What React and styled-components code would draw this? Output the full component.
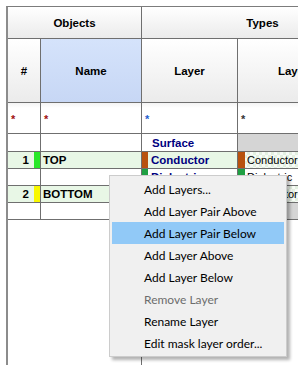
import styled, { createGlobalStyle } from 'styled-components';

const GlobalStyle = createGlobalStyle`
  html, body {
    margin: 0;
    padding: 0;
    background: #fff;
  }
  body {
    width: 298px;
    height: 365px;
    overflow: hidden;
    font-family: "Liberation Sans", Arial, sans-serif;
  }
`;

// widths include the 1px right grid line
const W = { num: 33, name: 101, layer: 96, type: 146 };

const Screen = styled.div`
  position: relative;
  width: 298px;
  height: 365px;
  overflow: hidden;
  box-sizing: border-box;
  padding: 6px 0 0 6px;
`;

const Sheet = styled.div`
  display: flex;
  flex-direction: column;
  width: max-content;
  height: 100%;
  border-left: 2px solid #8c8c8c;
  border-top: 1px solid #7c7c7c;
`;

const Row = styled.div`
  display: flex;
  flex-shrink: 0;
  height: ${(p) => p.$h}px;
`;

const Cell = styled.div`
  box-sizing: border-box;
  width: ${(p) => p.$w}px;
  display: flex;
  align-items: center;
  justify-content: ${(p) => p.$justify || 'flex-start'};
  padding-left: ${(p) => p.$pad || 0}px;
  border-right: 1px solid #6f6f6f;
  border-bottom: 1px solid #6f6f6f;
  background: ${(p) => p.$bg || '#fff'};
  font-size: 11.5px;
  font-weight: bold;
  color: #000;
  white-space: nowrap;
  overflow: hidden;
`;

const HeadCell = styled(Cell)`
  justify-content: center;
  background: ${(p) =>
    p.$selected
      ? 'linear-gradient(#d5e3fb, #c7d7f5)'
      : 'linear-gradient(#ffffff, #ebebeb)'};
`;

const FilterCell = styled(Cell)`
  align-items: flex-start;
  padding-top: 11px;
  padding-left: 3px;
  background: linear-gradient(#f4f4f4, #ffffff 5px);
`;

const Star = styled.span`
  color: ${(p) => p.$color};
  font-size: 11px;
  line-height: 11px;
`;

const Strip = styled.span`
  align-self: stretch;
  width: ${(p) => p.$w || 6}px;
  flex-shrink: 0;
  background: ${(p) => p.$color || 'transparent'};
`;

const Num = styled.span`
  margin-right: 5px;
`;

const LayerText = styled.span`
  margin-left: ${(p) => p.$gap || 3}px;
  color: ${(p) => (p.$plain ? '#000' : '#000080')};
  font-weight: ${(p) => (p.$plain ? 'normal' : 'bold')};
  font-size: ${(p) => (p.$plain ? '11px' : 'inherit')};
`;

const Filler = styled.div`
  flex: 1;
  width: ${W.num + W.name}px;
  box-sizing: border-box;
  border-right: 1px solid #6f6f6f;
`;

const Menu = styled.div`
  position: absolute;
  left: 109px;
  top: 175px;
  width: 178px;
  box-sizing: border-box;
  padding: 2px;
  background: #f0f0f0;
  border: 1px solid #cccccc;
  box-shadow: 3px 3px 3px rgba(0, 0, 0, 0.3);
  font-family: Lato, "Noto Sans", sans-serif;
  font-size: 12px;
`;

const Item = styled.div`
  height: 22px;
  display: flex;
  align-items: center;
  padding-left: 32px;
  color: ${(p) => (p.$disabled ? '#6d6d6d' : '#000')};
  background: ${(p) => (p.$active ? '#91c9f7' : 'transparent')};
`;

const GREEN_ROW = '#e8f7e6';
const CHECKER =
  'repeating-conic-gradient(#e3f0e1 0 25%, #f8fbf7 0 50%) 0 0 / 6px 6px';
const BROWN = '#b8520f';
const DIEL = '#1f9f42';

const objects = [
  { kind: 'surface' },
  { kind: 'cond', no: 1, name: 'TOP', color: '#28e828' },
  { kind: 'diel' },
  { kind: 'cond', no: 2, name: 'BOTTOM', color: '#f8f800' },
  { kind: 'surface' },
];

const menuItems = [
  'Add Layers...',
  'Add Layer Pair Above',
  'Add Layer Pair Below',
  'Add Layer Above',
  'Add Layer Below',
  'Remove Layer',
  'Rename Layer',
  'Edit mask layer order...',
];

const DataRow = ({ row, first }) => {
  const h = first ? 18 : 17;
  if (row.kind === 'cond') {
    return (
      <Row $h={h}>
        <Cell $w={W.num} $bg={GREEN_ROW} $justify="flex-end">
          <Num>{row.no}</Num>
          <Strip $color={row.color} />
        </Cell>
        <Cell $w={W.name} $bg={GREEN_ROW} $pad={2}>{row.name}</Cell>
        <Cell $w={W.layer} $bg={GREEN_ROW}>
          <Strip $color={BROWN} />
          <LayerText>Conductor</LayerText>
        </Cell>
        <Cell $w={W.type} $bg={CHECKER}>
          <Strip $color={BROWN} $w={7} />
          <LayerText $plain $gap={2}>Conductor</LayerText>
        </Cell>
      </Row>
    );
  }
  if (row.kind === 'diel') {
    return (
      <Row $h={h}>
        <Cell $w={W.num} />
        <Cell $w={W.name} />
        <Cell $w={W.layer}>
          <Strip $color={DIEL} />
          <LayerText>Dielectric</LayerText>
        </Cell>
        <Cell $w={W.type}>
          <Strip $color={DIEL} $w={7} />
          <LayerText $plain $gap={2}>Dielectric</LayerText>
        </Cell>
      </Row>
    );
  }
  return (
    <Row $h={h}>
      <Cell $w={W.num} />
      <Cell $w={W.name} />
      <Cell $w={W.layer}>
        <Strip />
        <LayerText $gap={4}>Surface</LayerText>
      </Cell>
      <Cell $w={W.type} $bg="#d5d5d5" />
    </Row>
  );
};

const App = () => (
  <>
    <GlobalStyle />
    <Screen>
      <Sheet>
        <Row $h={32}>
          <HeadCell $w={W.num + W.name}>Objects</HeadCell>
          <HeadCell $w={W.layer + W.type}>Types</HeadCell>
        </Row>
        <Row $h={64}>
          <HeadCell $w={W.num}>#</HeadCell>
          <HeadCell $w={W.name} $selected>Name</HeadCell>
          <HeadCell $w={W.layer}>Layer</HeadCell>
          <HeadCell $w={W.type}>Layer Name</HeadCell>
        </Row>
        <Row $h={31}>
          <FilterCell $w={W.num}><Star $color="#a01010">*</Star></FilterCell>
          <FilterCell $w={W.name}><Star $color="#a01010">*</Star></FilterCell>
          <FilterCell $w={W.layer}><Star $color="#1d5fd0">*</Star></FilterCell>
          <FilterCell $w={W.type}><Star $color="#333">*</Star></FilterCell>
        </Row>
        {objects.map((row, i) => (
          <DataRow key={i} row={row} first={i === 0} />
        ))}
        <Filler />
      </Sheet>

      <Menu>
        {menuItems.map((label, i) => (
          <Item key={label} $active={i === 2} $disabled={i === 5}>
            {label}
          </Item>
        ))}
      </Menu>
    </Screen>
  </>
);

export default App;
